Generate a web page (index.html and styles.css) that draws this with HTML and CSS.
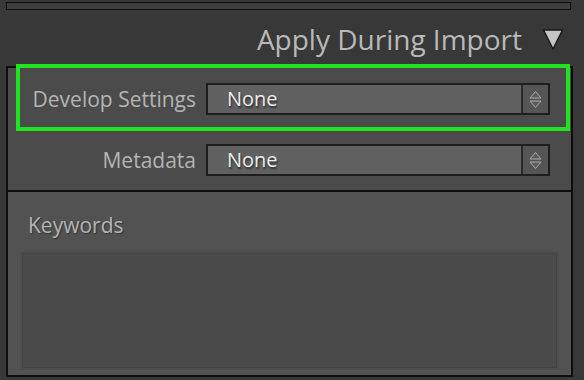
FILE: index.html
```html
<!DOCTYPE html>
<html>
<head>
  <title>Apply During Import</title>
  <link rel="stylesheet" href="styles.css">
</head>
<body>
  <div class="collapsed-bar"></div>

  <div class="panel-header">
    <span class="panel-title">Apply During Import</span>
    <svg class="disclosure" width="22" height="22" viewBox="0 0 22 22">
      <polygon points="1.5,2 20.5,2 11,21" fill="#c4c4c4" stroke="#1a1a1a" stroke-width="1.5" stroke-linejoin="round"/>
    </svg>
  </div>

  <div class="panel">
    <div class="settings">
      <div class="row row-develop">
        <label class="row-label">Develop Settings</label>
        <div class="popup">
          <span class="popup-value">None</span>
          <span class="popup-stepper">
            <svg width="13" height="19" viewBox="0 0 13 19">
              <polygon points="6.5,1.5 12,8 1,8" fill="#5c5c5c" stroke="#aaa" stroke-width="1"/>
              <polygon points="1,11 12,11 6.5,17.5" fill="#5c5c5c" stroke="#aaa" stroke-width="1"/>
            </svg>
          </span>
        </div>
        <div class="highlight"></div>
      </div>
      <div class="row">
        <label class="row-label">Metadata</label>
        <div class="popup">
          <span class="popup-value">None</span>
          <span class="popup-stepper">
            <svg width="13" height="19" viewBox="0 0 13 19">
              <polygon points="6.5,1.5 12,8 1,8" fill="#5c5c5c" stroke="#aaa" stroke-width="1"/>
              <polygon points="1,11 12,11 6.5,17.5" fill="#5c5c5c" stroke="#aaa" stroke-width="1"/>
            </svg>
          </span>
        </div>
      </div>
    </div>

    <div class="keywords">
      <div class="keywords-title">Keywords</div>
      <div class="keywords-box"></div>
    </div>
  </div>
</body>
</html>
```

FILE: styles.css
```css
body {
  margin: 0;
  width: 584px;
  height: 380px;
  overflow: hidden;
  background: #383838;
  font-family: "Open Sans", "Noto Sans", sans-serif;
  color: #b4b4b4;
}
.collapsed-bar {
  margin: 2px 0 0 6px;
  width: 563px;
  height: 6px;
  border: 1px solid #0c0c0c;
  background: #3f3f3f;
}
.panel-header {
  height: 56px;
  display: flex;
  justify-content: flex-end;
  align-items: center;
  padding-right: 20px;
}
.panel-title {
  font-size: 28px;
  color: #b9b9b9;
  margin-right: 20px;
  margin-top: 2px;
}
.disclosure {
  display: block;
  margin-top: 2px;
}
.panel {
  margin-left: 6px;
  width: 563px;
  border: 2px solid #0e0e0e;
}
.settings {
  background: #4b4b4b;
  border-bottom: 2px solid #0e0e0e;
}
.row {
  height: 60px;
  display: flex;
  align-items: center;
  position: relative;
}
.row-develop {
  height: 62px;
}
.row-label {
  width: 188px;
  text-align: right;
  font-size: 21px;
  color: #b4b4b4;
  margin-right: 10px;
}
.popup {
  width: 340px;
  height: 28px;
  display: flex;
  border: 2px solid #1e1e1e;
  background: #616161;
}
.popup-value {
  flex-grow: 1;
  padding-left: 19px;
  font-size: 20px;
  line-height: 28px;
  color: #ececec;
  text-shadow: 1px 2px 2px #2a2a2a;
}
.popup-stepper {
  width: 25px;
  border-left: 2px solid #2a2a2a;
  background: #555;
  display: flex;
  align-items: center;
  justify-content: center;
}
.popup-stepper svg {
  display: block;
}

/* green callout drawn over the row */
.highlight {
  position: absolute;
  top: -4px;
  left: 8px;
  right: 1px;
  bottom: -1px;
  border: 4px solid #1fe41f;
  pointer-events: none;
}

.keywords {
  height: 183px;
  background: #525252;
  padding: 19px 14px 0 14px;
  box-sizing: border-box;
}
.keywords-title {
  font-size: 21px;
  color: #b4b4b4;
  margin-left: 6px;
  text-shadow: 1px 1px 1px #333;
}
.keywords-box {
  margin-top: 14px;
  height: 113px;
  width: 533px;
  border: 1px solid #444;
  background: #4a4a4a;
  box-shadow: 0 0 0 2px #4e4e4e;
}
```
